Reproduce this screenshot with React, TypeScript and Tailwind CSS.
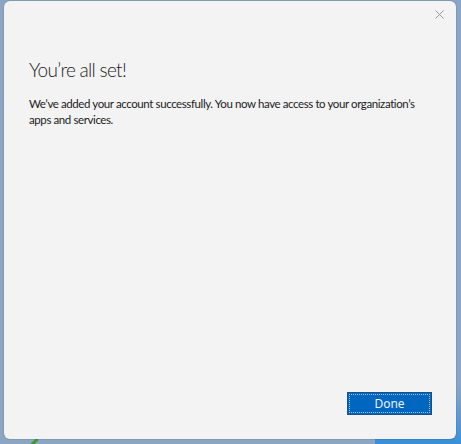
import React from 'react';

export default function App() {
  return (
    <div className="relative h-[444px] w-[461px] overflow-hidden bg-[#8ca5c3]">
      {/* desktop bits peeking out around the window */}
      <div className="absolute bottom-0 right-0 h-[6px] w-[86px] bg-[#3a8fd6]" />
      <div className="absolute bottom-0 right-0 h-[60px] w-[6px] bg-gradient-to-b from-[#8ca5c3] to-[#3a8fd6]" />
      <div className="absolute bottom-[0px] left-[29px] h-[3px] w-[10px] rotate-[-45deg] bg-[#3c9b2e]" />

      <div className="absolute left-[4px] top-[1px] flex h-[438px] w-[452px] flex-col rounded-[6px] bg-[#f3f3f3] font-['Lato',sans-serif] text-[#1b1b1b] shadow-[0_0_0_1px_rgba(0,0,0,0.08)]">
        <div className="flex justify-end pr-[10px] pt-[6px]">
          <button className="flex h-[14px] w-[14px] items-center justify-center text-[#9a9a9a]">
            <svg width="9" height="9" viewBox="0 0 9 9" fill="none" stroke="currentColor" strokeWidth="1">
              <path d="M0.5 0.5 L8.5 8.5 M8.5 0.5 L0.5 8.5" />
            </svg>
          </button>
        </div>

        <div className="px-[25px] pt-[36px]">
          <h1 className="text-[19px] font-light leading-[26px] tracking-[-0.7px]">You’re all set!</h1>
          <p className="mt-[13px] text-[11.5px] leading-[16px] tracking-[-0.4px]">
            We’ve added your account successfully. You now have access to your organization’s apps and services.
          </p>
        </div>

        <div className="flex-1" />

        <div className="flex justify-end pb-[24px] pr-[24px]">
          <button className="flex h-[23px] w-[85px] items-center justify-center border border-[#1d4f80] bg-[#0067c0] p-[1px]">
            <span className="flex h-full w-full items-center justify-center border border-dotted border-[#9cc4ea] font-['Noto_Sans',sans-serif] text-[12px] text-[#eaf3fc]">
              Done
            </span>
          </button>
        </div>
      </div>
    </div>
  );
}
